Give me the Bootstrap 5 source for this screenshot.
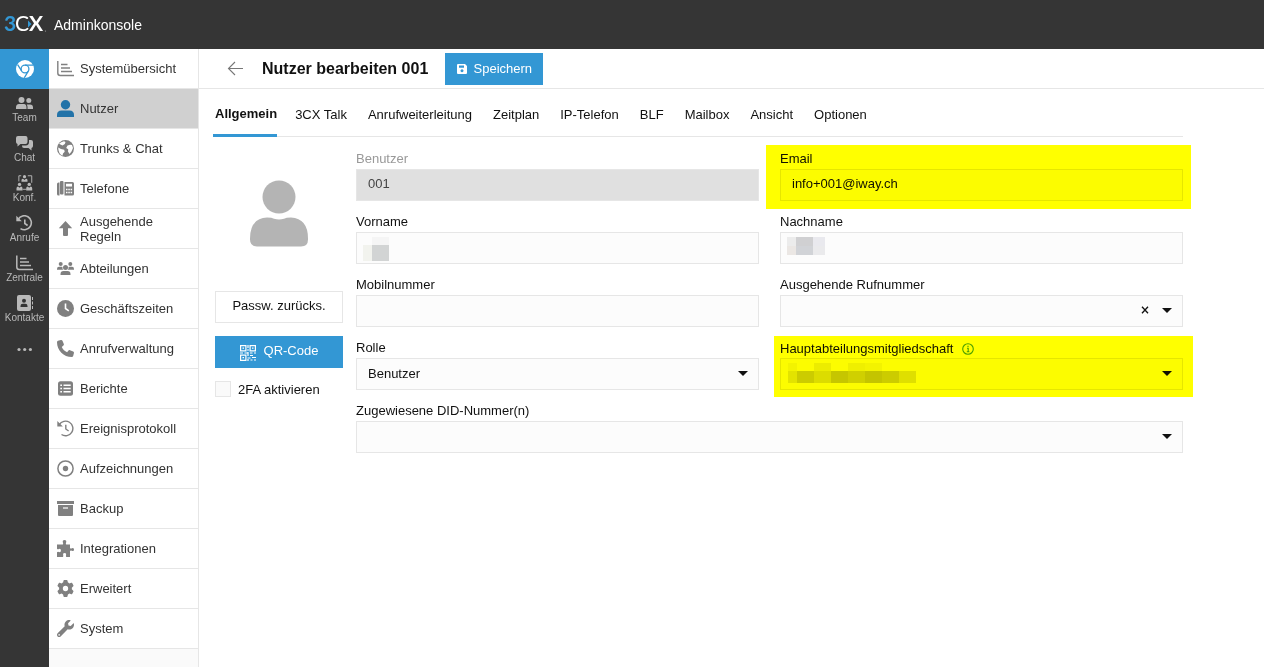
<!DOCTYPE html>
<html lang="de">
<head>
<meta charset="utf-8">
<meta name="viewport" content="width=device-width, initial-scale=1">
<title>3CX Adminkonsole</title>
<link href="https://cdn.jsdelivr.net/npm/bootstrap@5.3.0/dist/css/bootstrap.min.css" rel="stylesheet">
<style>
  :root { --blue: #3397d4; --line: #e6e6e6; --dark: #353535; }
  body { font-family: "Liberation Sans", Arial, sans-serif; font-size: 13px; line-height: 15px; color: #111; background: #fff; }
  a { text-decoration: none; color: inherit; }
  svg { display: block; flex: none; }
  .topbar { height: 49px; background: var(--dark); color: #fff; padding: 0 4px; gap: 3px; }
  .topbar h1 { font-size: 14px; line-height: 16px; font-weight: 400; }
  .rail { width: 49px; background: var(--dark); color: #b9b9b9; font-size: 10px; line-height: 14px; }
  .rail a { height: 40px; padding-top: 6px; }
  .rail a.current { background: var(--blue); color: #fff; padding-top: 0; }
  .sidenav { width: 150px; background: #fafafa; border-right: 1px solid var(--line); color: #333; }
  .sidenav a { height: 40px; padding: 0 8px; gap: 6px; border-bottom: 1px solid var(--line); background: #fff; }
  .sidenav a.current { background: #d0d0d0; }
  .sidenav svg { color: #808080; }
  .sidenav a.current svg { color: #2373a8; }
  .titlebar { height: 40px; border-bottom: 1px solid var(--line); padding-left: 28px; }
  .titlebar h2 { font-size: 16px; line-height: 20px; font-weight: 700; margin-left: 18px; }
  .flatbtn { --bs-btn-border-radius: 0; --bs-btn-font-size: 13px; --bs-btn-line-height: 15px; height: 32px; padding: 0 0 3px; }
  .flatbtn.primary { background: var(--blue); border: 0; color: #fff; }
  .flatbtn.plain { background: #fff; border: 1px solid var(--line); color: #111; }
  .flatbtn.save { width: 98px; margin-left: 17px; gap: 7px; padding: 0; }
  .page { max-width: 1000px; padding: 0 16px; }
  .tabs { border-bottom: 1px solid var(--line); gap: 21px; height: 48px; }
  .tabs a { height: 48px; padding-top: 18px; white-space: nowrap; }
  .tabs a.current { font-weight: 700; padding: 17px 0 0 2px; margin: 0 -3px 0 -2px; border-bottom: 3px solid var(--blue); }
  .editor { display: grid; grid-template-columns: 128px 1fr; gap: 13px; padding-top: 13px; }
  .avatar { height: 141px; padding-bottom: 14px; color: #b4b4b4; }
  .person { gap: 13px; }
  .fields { display: grid; grid-template-columns: 1fr 1fr; gap: 12px 21px; align-content: start; }
  .fields label { height: 19px; line-height: 17px; }
  .wide { grid-column: span 2; }
  .box { height: 32px; border: 1px solid var(--line); border-radius: 0; background: #fcfcfc; padding: 0 11px 2px; font-size: 13px; line-height: 15px; color: #111; width: 100%; appearance: none; display: block; }
  input.box { padding-bottom: 3px; }
  .box:disabled { background: #e0e0e0; color: #444; opacity: 1; }
  .muted { color: #999; }
  .arrow { position: absolute; right: 11px; top: 13px; border: 5px solid transparent; border-top-color: #111; border-bottom: 0; pointer-events: none; }
  .clear { position: absolute; right: 34px; top: 10px; border: 0; background: none; padding: 0; }
  .blocks { position: absolute; left: 7px; top: 5px; }
  .lit { position: relative; }
  .lit::after { content: ""; position: absolute; inset: -5px -8px -8px -14px; background: #ff0; mix-blend-mode: multiply; pointer-events: none; }
  .lit.low::after { inset: -3px -10px -7px -6px; }
  .check { width: 16px; height: 16px; appearance: none; border: 1px solid var(--line); background: #fafafa; }
  .checklabel { padding-left: 7px; }
</style>
</head>
<body class="d-flex flex-column min-vh-100">
<header class="topbar d-flex align-items-center">
  <svg width="47" height="28" viewBox="0 0 47 28" role="img" aria-label="3CX">
    <g font-family="Lato, sans-serif" font-size="21">
      <text x="0" y="20" font-weight="700" fill="#3397d4">3</text>
      <text x="11" y="20" font-weight="400" fill="#fff">C</text>
      <text x="25" y="20" font-weight="700" fill="#fff">X</text>
    </g>
    <path d="M24 9.500l3.500 3.500-3.500 3.500z" fill="#3397d4"/><circle cx="41.500" cy="20" r=".6" fill="#aaa"/>
  </svg>
  <h1 class="mb-0">Adminkonsole</h1>
</header>

<div class="d-flex flex-grow-1">
  <nav class="rail flex-shrink-0" aria-label="Module">
    <a href="#" class="current d-flex align-items-center justify-content-center" aria-label="Web">
      <svg width="18" height="18" viewBox="0 0 18 18"><circle cx="9" cy="9" r="9" fill="currentColor"/><g fill="none" stroke="#3397d4" stroke-width="1.300"><circle cx="9" cy="9" r="3.900"/><path d="M9 5.100h8.500M5.600 10.900L1.600 4.600M12.300 11.100L8.300 17.800"/></g></svg>
    </a>
    <a href="#" class="d-flex flex-column align-items-center"><svg width="17" height="16" viewBox="0 0 17 16" fill="currentColor"><circle cx="5.500" cy="5" r="3"/><circle cx="12.800" cy="5.500" r="2.500"/><path d="M0 14v-1.500Q0 9 3 9h5q2.500 0 2.500 3.500V14zM11.500 14v-2q0-1.500-.8-2.500h3.300q3 0 3 3V14z"/></svg><span>Team</span></a>
    <a href="#" class="d-flex flex-column align-items-center"><svg width="17" height="16" viewBox="0 0 17 16" fill="currentColor"><path d="M2 1h7.500q2 0 2 2v4q0 2-2 2H4.500L1.500 11.500V9Q0 8.500 0 7V3q0-2 2-2z"/><path d="M13 5h2q2 0 2 2v4q0 1.500-1.500 2v2.500L12.500 13H8q-2 0-2-2v-.6h3.800Q13 10.400 13 7z"/></svg><span>Chat</span></a>
    <a href="#" class="d-flex flex-column align-items-center"><svg width="17" height="16" viewBox="0 0 17 17" fill="currentColor"><path d="M5 .8H2.500v6M12 .8h4.200v7.500M6.500 15.200h4" fill="none" stroke="currentColor"/><circle cx="8.500" cy="1.800" r="1.700"/><circle cx="3.200" cy="10" r="1.800"/><circle cx="13.500" cy="10" r="1.800"/><path d="M5.300 7.200V5.500Q5.300 4 7 4l1.500 1.200L10 4q1.700 0 1.700 1.500v1.700zM0 16.500v-2.200Q0 12.300 1.700 12.300l1.500 1.300 1.500-1.300q1.700 0 1.700 2v2.200zM10.300 16.500v-2.200q0-2 1.700-2l1.500 1.300 1.500-1.300q1.700 0 1.700 2v2.200z"/></svg><span>Konf.</span></a>
    <a href="#" class="d-flex flex-column align-items-center"><svg width="17" height="16" viewBox="0 0 17 16" fill="none" stroke="currentColor" stroke-width="1.600"><path d="M2.300 4.200A7 7 0 1 1 4.500 13.600M8.800 4.500V8.500l2.800 2"/><path d="M.3.800v5.400h5.500z" fill="currentColor" stroke="none"/></svg><span>Anrufe</span></a>
    <a href="#" class="d-flex flex-column align-items-center"><svg width="17" height="16" viewBox="0 0 17 16" fill="none" stroke="currentColor" stroke-width="1.500"><path d="M.8.500V12q0 2.500 2.500 2.500H17M4 3.500h6.500M4 7h9M4 10.500h11"/></svg><span>Zentrale</span></a>
    <a href="#" class="d-flex flex-column align-items-center"><svg width="17" height="16" viewBox="0 0 17 16"><rect x="1" y="0" width="14" height="16" rx="2" fill="currentColor"/><circle cx="8" cy="5.800" r="2" fill="#353535"/><path d="M4.500 12v-1q0-2.300 2.300-2.300h2.400q2.300 0 2.300 2.300v1z" fill="#353535"/><path d="M16.500 2v3M16.500 6.500v3M16.500 11v3" stroke="currentColor"/></svg><span>Kontakte</span></a>
    <a href="#" class="d-flex flex-column align-items-center" aria-label="Mehr"><svg width="17" height="30" viewBox="0 0 17 30" fill="currentColor"><circle cx="3" cy="14.500" r="1.600"/><circle cx="8.700" cy="14.500" r="1.600"/><circle cx="14.400" cy="14.500" r="1.600"/></svg></a>
  </nav>

  <nav class="sidenav flex-shrink-0" aria-label="Verwaltung">
    <a href="#" class="d-flex align-items-center"><svg width="17" height="17" viewBox="0 0 17 17" fill="none" stroke="currentColor" stroke-width="1.400"><path d="M.8 1V13q0 2.500 2.500 2.500H17M4 4.500h6.500M4 8h9M4 11.500h11"/></svg>Systemübersicht</a>
    <a href="#" class="current d-flex align-items-center" aria-current="page"><svg width="17" height="17" viewBox="0 0 17 17" fill="currentColor"><circle cx="8.500" cy="4.700" r="4.700"/><path d="M0 17V15q0-4.500 4.500-4.500h8q4.500 0 4.500 4.500v2z"/></svg>Nutzer</a>
    <a href="#" class="d-flex align-items-center"><svg width="17" height="17" viewBox="0 0 17 17"><circle cx="8.500" cy="8.500" r="8.500" fill="currentColor"/><path d="M2 3.800L5.500 5.500 7.800 4 8.500 2 7 1.200Q4 1.700 2 3.800zM1.200 7.500L4 9l3.200.8.500 2L6 13.500l-.5 2.300Q1.200 13.500 1.200 7.500zM10.500 5.500l2.500-.8 2 .3 1 3-1.500 3.500-2 2.500-1.500-2.500.2-2.200-2-1.300z" fill="#fff"/></svg>Trunks &amp; Chat</a>
    <a href="#" class="d-flex align-items-center"><svg width="17" height="17" viewBox="0 0 17 17"><path d="M1.500 2.500Q0 2.500 0 4v10q0 1.500 1.500 1.500h1v-13zM4 1h1.500q1 0 1 1v11.500q0 1-1 1H4q-1 0-1-1V2q0-1 1-1zM8 2h7.500q1.500 0 1.500 1.500V14q0 1.500-1.500 1.500H7.500V2z" fill="currentColor"/><path d="M9 3.800h6v2.800H9zM9 8.700h1.500v1.500H9zm2.300 0h1.500v1.500h-1.500zm2.300 0h1.500v1.500h-1.500zM9 11.700h1.500v1.500H9zm2.300 0h1.500v1.500h-1.500zm2.300 0h1.500v1.500h-1.500z" fill="#fff"/></svg>Telefone</a>
    <a href="#" class="d-flex align-items-center"><svg width="17" height="17" viewBox="0 0 17 17" fill="currentColor"><path d="M8.500 1l6.700 7.200H11V15q0 1-1 1H7q-1 0-1-1V8.200H1.800z"/></svg>Ausgehende Regeln</a>
    <a href="#" class="d-flex align-items-center"><svg width="17" height="17" viewBox="0 0 17 17" fill="currentColor"><circle cx="3.700" cy="4" r="2"/><circle cx="13.300" cy="4" r="2"/><circle cx="8.500" cy="7.500" r="2.500"/><path d="M0 9.800V9q0-2.200 2-2.200h2.500q.6 0 1 .3-.4 1.800.7 2.700zM17 9.800V9q0-2.200-2-2.200h-2.500q-.6 0-1 .3.400 1.800-.7 2.700zM3.500 15v-.8q0-3.200 3-3.200h4q3 0 3 3.200v.8z"/></svg>Abteilungen</a>
    <a href="#" class="d-flex align-items-center"><svg width="17" height="17" viewBox="0 0 17 17"><circle cx="8.500" cy="8.500" r="8.500" fill="currentColor"/><path d="M8.500 3.500v5l3.300 2.300" fill="none" stroke="#fff" stroke-width="1.600"/></svg>Geschäftszeiten</a>
    <a href="#" class="d-flex align-items-center"><svg width="17" height="17" viewBox="0 0 512 512" fill="currentColor"><path d="M164.900 24.600c-7.700-18.600-28-28.500-47.400-23.200l-88 24C12.100 30.200 0 46 0 64C0 311.400 200.600 512 448 512c18 0 33.800-12.100 38.600-29.500l24-88c5.300-19.400-4.600-39.700-23.200-47.400l-96-40c-16.300-6.800-35.200-2.100-46.300 11.600L304.700 368C234.300 334.700 177.300 277.700 144 207.300L193.300 167c13.700-11.200 18.400-30 11.600-46.300l-40-96z"/></svg>Anrufverwaltung</a>
    <a href="#" class="d-flex align-items-center"><svg width="17" height="17" viewBox="0 0 17 17"><rect x="1" y="1.200" width="15" height="14.600" rx="2.500" fill="currentColor"/><path d="M3.300 5.300h1.700M6.500 5.300h7.200M3.300 8.500h1.700M6.500 8.500h7.200M3.300 11.700h1.700M6.500 11.700h7.200" stroke="#fff" stroke-width="1.500"/></svg>Berichte</a>
    <a href="#" class="d-flex align-items-center"><svg width="17" height="17" viewBox="0 0 17 17" fill="none" stroke="currentColor" stroke-width="1.400"><path d="M2.300 4.700A7.300 7.300 0 1 1 4.500 14.500M8.800 4.800V9l2.800 2"/><path d="M.3 1v5.400h5.500z" fill="currentColor" stroke="none"/></svg>Ereignisprotokoll</a>
    <a href="#" class="d-flex align-items-center"><svg width="17" height="17" viewBox="0 0 17 17"><circle cx="8.500" cy="8.500" r="7.600" fill="none" stroke="currentColor" stroke-width="1.500"/><circle cx="8.500" cy="8.500" r="2.700" fill="currentColor"/></svg>Aufzeichnungen</a>
    <a href="#" class="d-flex align-items-center"><svg width="17" height="17" viewBox="0 0 17 17"><path d="M0 1h17v3H0zM1 5h15v10q0 1-1 1H2q-1 0-1-1z" fill="currentColor"/><path d="M6 8h5" stroke="#fff" stroke-width="1.200"/></svg>Backup</a>
    <a href="#" class="d-flex align-items-center"><svg width="17" height="17" viewBox="0 0 17 17" fill="currentColor"><path d="M0 4.500h5.700Q6.600 4 6 2.900 5 0 7.500 0q2.500 0 1.500 2.900-.6 1.100.3 1.600H13V8q.6 1 2 .2 2-.8 2 1.300t-2 1.300q-1.400-.7-2 .3V17H9.300q-.8-.8-.2-2 .6-1.900-1.500-1.900T6.100 15q.6 1.200-.2 2H0v-4.800q.8-.9 2-.2 1.900.6 1.900-1.500T2 9q-1.200.6-2-.3z"/></svg>Integrationen</a>
    <a href="#" class="d-flex align-items-center"><svg width="17" height="17" viewBox="0 0 512 512" fill="currentColor"><path d="M495.900 166.600c3.200 8.700 .5 18.400-6.400 24.600l-43.300 39.400c1.100 8.300 1.700 16.800 1.700 25.400s-.6 17.100-1.700 25.400l43.300 39.400c6.900 6.200 9.600 15.900 6.400 24.600c-4.400 11.900-9.700 23.300-15.800 34.300l-4.700 8.100c-6.600 11-14 21.400-22.100 31.200c-5.900 7.200-15.700 9.600-24.500 6.800l-55.700-17.700c-13.400 10.300-28.200 18.900-44 25.400l-12.500 57.100c-2 9.100-9 16.300-18.200 17.800c-13.800 2.300-28 3.500-42.500 3.500s-28.700-1.200-42.500-3.500c-9.200-1.500-16.200-8.700-18.200-17.800l-12.500-57.100c-15.800-6.500-30.600-15.100-44-25.400L83.100 425.900c-8.800 2.800-18.600 .3-24.500-6.800c-8.100-9.800-15.500-20.200-22.100-31.200l-4.700-8.100c-6.100-11-11.400-22.400-15.800-34.300c-3.200-8.700-.5-18.400 6.400-24.600l43.300-39.400C64.600 273.100 64 264.600 64 256s.6-17.100 1.700-25.400L22.400 191.200c-6.900-6.200-9.600-15.900-6.400-24.600c4.400-11.900 9.700-23.300 15.800-34.300l4.700-8.100c6.600-11 14-21.400 22.100-31.200c5.900-7.200 15.700-9.600 24.500-6.800l55.700 17.700c13.400-10.300 28.200-18.900 44-25.400l12.500-57.100c2-9.100 9-16.300 18.200-17.800C227.300 1.200 241.500 0 256 0s28.700 1.200 42.500 3.500c9.200 1.500 16.200 8.700 18.200 17.800l12.500 57.100c15.800 6.500 30.600 15.100 44 25.400l55.700-17.700c8.800-2.800 18.600-.3 24.500 6.800c8.100 9.800 15.500 20.200 22.100 31.200l4.700 8.100c6.100 11 11.400 22.400 15.800 34.300zM256 336a80 80 0 1 0 0-160 80 80 0 1 0 0 160z"/></svg>Erweitert</a>
    <a href="#" class="d-flex align-items-center"><svg width="17" height="17" viewBox="0 0 512 512" fill="currentColor"><path d="M507.730 109.100c-2.240-9.030-13.540-12.090-20.120-5.510l-74.360 74.360-67.880-11.310-11.310-67.880 74.360-74.360c6.620-6.620 3.430-17.900-5.660-20.160-47.380-11.740-99.550.91-136.580 37.930-39.640 39.640-50.550 97.100-34.050 147.200L18.740 402.760c-24.990 24.990-24.990 65.510 0 90.500 24.990 24.990 65.510 24.990 90.500 0l213.210-213.210c50.120 16.710 107.470 5.680 147.370-34.220 37.070-37.070 49.700-89.320 37.910-136.730zM64 472c-13.250 0-24-10.750-24-24 0-13.260 10.750-24 24-24s24 10.740 24 24c0 13.250-10.750 24-24 24z"/></svg>System</a>
  </nav>

  <main class="flex-grow-1">
    <div class="titlebar d-flex align-items-center">
      <a href="#" aria-label="Zurück"><svg width="17" height="16" viewBox="0 0 17 16" fill="none" stroke="#777" stroke-width="1.100"><path d="M16 7.500H2M8 1L1.500 7.500 8 14"/></svg></a>
      <h2 class="mb-0">Nutzer bearbeiten 001</h2>
      <button type="button" class="btn flatbtn primary save d-flex align-items-center justify-content-center"><svg width="10" height="10" viewBox="0 0 10 10" fill="currentColor" fill-rule="evenodd"><path d="M1 0h7l2 2v7q0 1-1 1H1Q0 10 0 9V1Q0 0 1 0zM2 1.500v2.300h5V1.500zM5 5.200a1.500 1.500 0 1 0 .01 0z"/></svg>Speichern</button>
    </div>
    <div class="page">
      <nav class="tabs d-flex" aria-label="Nutzer">
        <a href="#" class="current" aria-current="page">Allgemein</a><a href="#">3CX Talk</a><a href="#">Anrufweiterleitung</a><a href="#">Zeitplan</a><a href="#">IP-Telefon</a><a href="#">BLF</a><a href="#">Mailbox</a><a href="#">Ansicht</a><a href="#">Optionen</a>
      </nav>
      <form class="editor">
        <div class="person d-flex flex-column">
          <div>
            <div class="avatar d-flex align-items-center justify-content-center"><svg width="58" height="68" viewBox="0 0 58 68" fill="currentColor"><circle cx="29" cy="17" r="16.500"/><path d="M17 37.500q5 0 7 1.200 5 1.600 10 0 2-1.200 7-1.200 17 1 17 21v1q0 7-7 7H7q-7 0-7-7v-1q0-20 17-21z"/></svg></div>
            <button type="button" class="btn flatbtn plain w-100">Passw. zurücks.</button>
          </div>
          <button type="button" class="btn flatbtn primary w-100 d-flex align-items-center justify-content-center gap-2"><svg class="mt-1" width="16" height="16" viewBox="0 0 16 16" fill="none" stroke="currentColor" stroke-width="1.200"><path d="M.6.600h5.300v5.300H.6zM10.100.600h5.300v5.300h-5.300zM.6 10.100h5.300v5.300H.6zM2.500 3.200h1.500M12 3.200h1.500M2.500 12.700h1.500M8 0v3M7 5h2M0 8h3M4.500 8h4M8 7v4M10 8h2.500M14 8h2M10 10.500h3M7.500 13h3M12 12.500h4M10.500 15h2M14 15h2M8 14v2"/></svg>QR-Code</button>
          <div class="d-flex align-items-center"><input type="checkbox" class="check" id="twofa"><label for="twofa" class="checklabel">2FA aktivieren</label></div>
        </div>
        <div class="fields">
          <div><label for="nr" class="muted d-block">Benutzer</label><input class="box" id="nr" value="001" disabled></div>
          <div class="lit"><label for="email" class="d-block">Email</label><input class="box" id="email" type="email" value="info+001@iway.ch"></div>
          <div><label for="vor" class="d-block">Vorname</label><div class="position-relative"><input class="box" id="vor">
            <svg class="blocks" width="26" height="24" shape-rendering="crispEdges"><path d="M9 0h17v8H9z" fill="#f5f5f5"/><path d="M0 8h9v16H0z" fill="#f2f3ee"/><path d="M9 8h17v16H9z" fill="#d2d4d4"/></svg></div></div>
          <div><label for="nach" class="d-block">Nachname</label><div class="position-relative"><input class="box" id="nach">
            <svg class="blocks" width="38" height="18" shape-rendering="crispEdges"><path d="M0 0h9v9H0z" fill="#ececec"/><path d="M0 9h9v9H0z" fill="#ebe7e4"/><path d="M9 0h17v9H9z" fill="#d0d0d2"/><path d="M9 9h17v9H9z" fill="#d1d3d7"/><path d="M26 0h12v9H26z" fill="#e9e9ee"/><path d="M26 9h12v9H26z" fill="#eaeaec"/></svg></div></div>
          <div><label for="mobil" class="d-block">Mobilnummer</label><input class="box" id="mobil" type="tel"></div>
          <div><label for="ruf" class="d-block">Ausgehende Rufnummer</label><div class="position-relative"><select class="box" id="ruf"><option></option></select><button type="button" class="clear" aria-label="Leeren"><svg width="8" height="10" viewBox="0 0 8 10" stroke="#111" stroke-width="1.300"><path d="M1 1.800l6 6.400M7 1.800L1 8.200"/></svg></button><span class="arrow"></span></div></div>
          <div><label for="rolle" class="d-block">Rolle</label><div class="position-relative"><select class="box" id="rolle"><option>Benutzer</option></select><span class="arrow"></span></div></div>
          <div class="lit low"><label for="abt" class="d-flex align-items-center">Hauptabteilungsmitgliedschaft<svg class="ms-2" width="14" height="14" viewBox="0 0 14 14" fill="none" stroke="#4a9f3a" stroke-width="1.100"><circle cx="7" cy="7" r="5.300"/><path d="M7 3.700v1.300M6 6.300h1.200v3.500M5.800 9.800h2.600"/></svg></label>
            <div class="position-relative"><select class="box" id="abt"><option></option></select>
            <svg class="blocks" width="130" height="22" shape-rendering="crispEdges"><path d="M1 0h9v8H1z" fill="#f3f3f3"/><path d="M27 0h17v8H27z" fill="#ececec"/><path d="M61 0h17v8H61z" fill="#efefef"/><path d="M78 0h17v8H78z" fill="#f3f3f3"/><path d="M1 8h9v12H1z" fill="#e3e3e3"/><path d="M10 8h17v12H10z" fill="#cccccc"/><path d="M27 8h17v12H27z" fill="#dcdcdc"/><path d="M44 8h17v12H44z" fill="#c6c6c6"/><path d="M61 8h17v12H61z" fill="#d0d0d0"/><path d="M78 8h17v12H78z" fill="#c4c4c4"/><path d="M95 8h17v12H95z" fill="#cccccc"/><path d="M112 8h17v12h-17z" fill="#dfdfdf"/></svg>
            <span class="arrow"></span></div></div>
          <div class="wide"><label for="did" class="d-block">Zugewiesene DID-Nummer(n)</label><div class="position-relative"><select class="box" id="did"><option></option></select><span class="arrow"></span></div></div>
        </div>
      </form>
    </div>
  </main>
</div>
<script src="https://cdn.jsdelivr.net/npm/bootstrap@5.3.0/dist/js/bootstrap.bundle.min.js"></script>
</body>
</html>
